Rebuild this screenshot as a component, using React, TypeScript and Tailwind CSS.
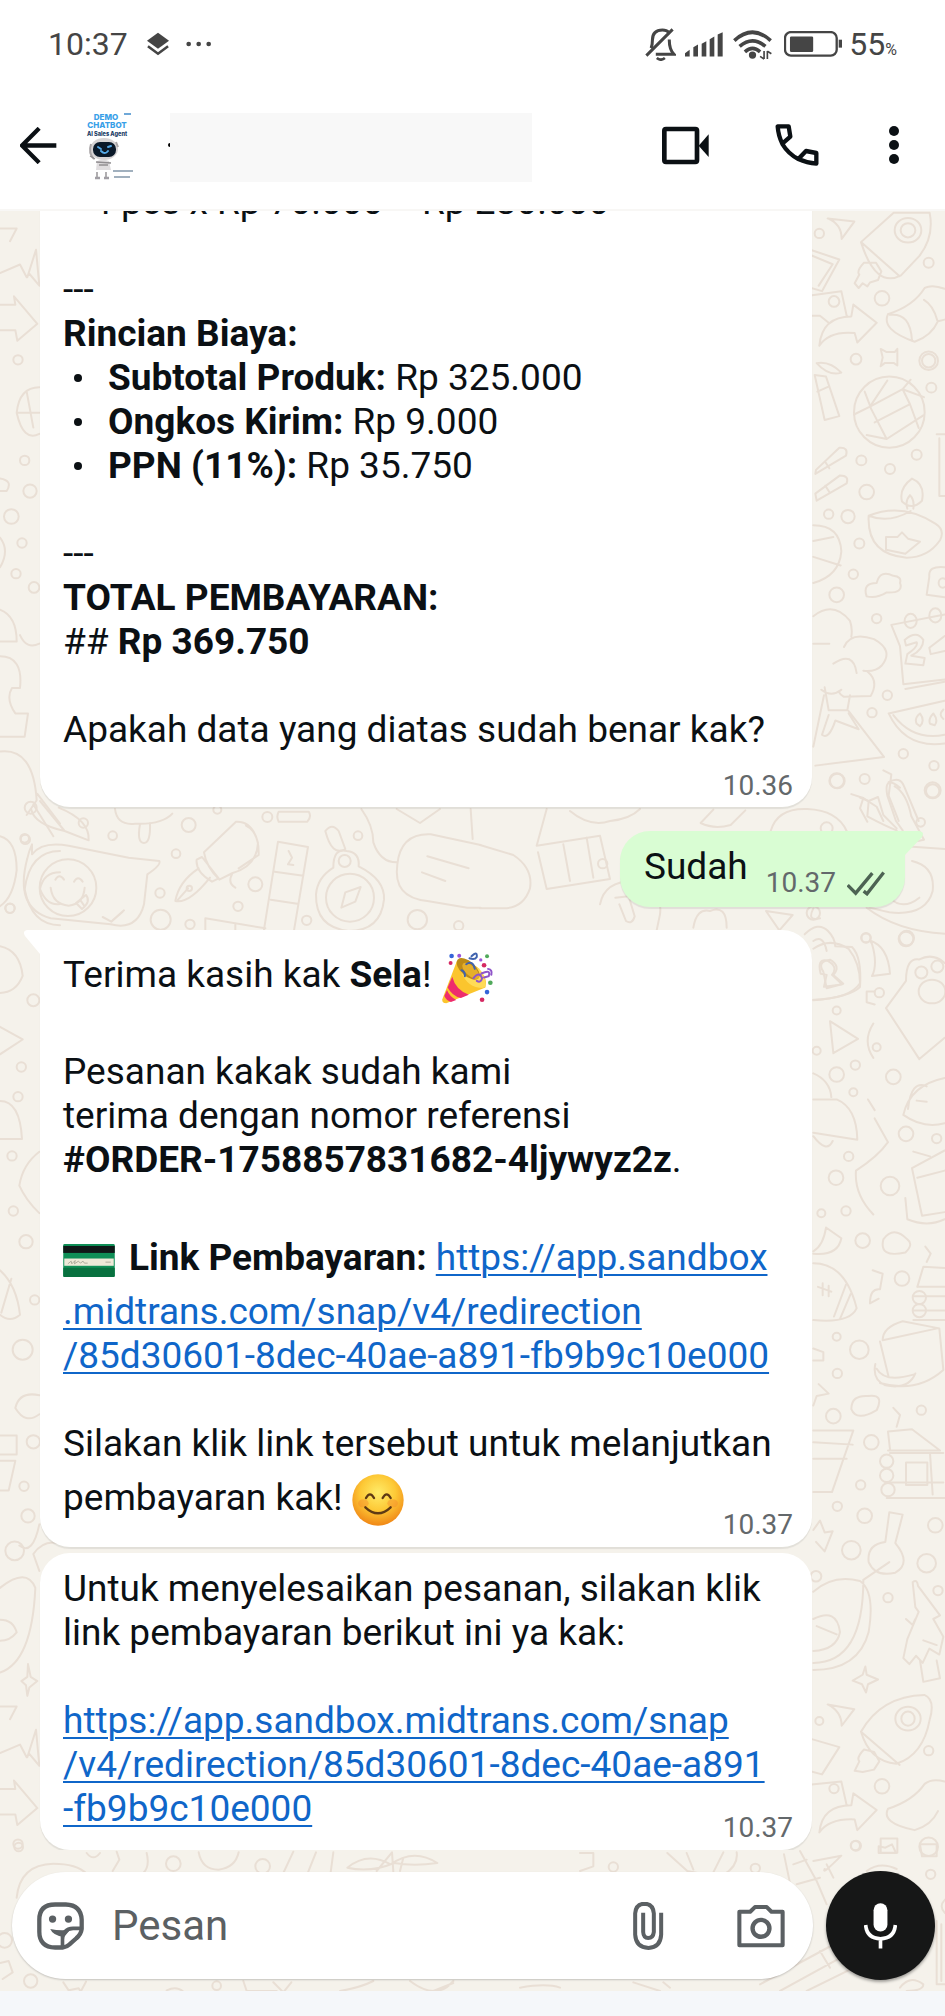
import type { ReactNode } from "react";

const PAYMENT_URL = "https://app.sandbox.midtrans.com/snap/v4/redirection/85d30601-8dec-40ae-a891-fb9b9c10e000";

type Dot = [number, number, number];

function Dots({ items, sy = 1 }: { items: Dot[]; sy?: number }) {
  return (
    <>
      {items.map(([x, y, r]) => (
        <ellipse key={`${x}-${y}-${r}`} cx={x} cy={y} rx={r} ry={r * sy} />
      ))}
    </>
  );
}

function Wallpaper() {
  return (
    <svg
      aria-hidden="true"
      viewBox="0 210 945 1781"
      preserveAspectRatio="xMidYMin slice"
      className="absolute inset-0 h-full w-full [&_*]:[vector-effect:non-scaling-stroke]"
      fill="none"
      stroke="#e9dfd5"
      strokeWidth="2"
      strokeLinecap="round"
      strokeLinejoin="round"
    >
      {/* right edge, upper part */}
      <g transform="translate(780 200) scale(.33333 .3954)">
        <path d="M143 44l80 8-38 44q0-38-42-52zM243 104l98-74h108q14 60-30 108l-56 50q-76 34-120-84zM243 104l116 86M252 156q-24 22-14 30l-14 22 12 12 12-12 14 8 8-10 24-6 10-22-16-22z" />
        <ellipse cx="384" cy="74" rx="40" ry="31" />
        <ellipse cx="384" cy="74" rx="22" ry="18" />
        <path d="M80 120l98 28-52 80-40-10M90 136l68 24-42 54M80 240l104-12 16 62M80 290l40 0 26 18M118 366q8-74 96-74l6-30 70 46-58 50-8-24q-76-6-106 32zM324 286q76-20 110-66 22-10 60 2M324 286q-22 40 80 70 50-14 70-52l20-4M432 250q28 14 40 52M330 288q62-6 66 66" />
        <path d="M302 374l18 8h24l8-8v42l-10-6h-28l-12 8 6-22zM110 410q40-6 74 24-38 10-74-24zM104 440l30 114 44-10-40-100zM112 482l32-12M108 680l70-56q28-2 20 20l-92 46zM106 740l74-46q28 0 20 20l-90 44zM136 660l12 16M136 720l12 16" />
        <ellipse cx="328" cy="534" rx="106" ry="90" />
        <path d="M222 540l48-20 52-66M270 520l98-44 64 20M368 476l24-24M270 520l50 82 110-60M320 602l-60-10M284 560l106-46M390 514l26 60M368 476l22 38M254 482l18 40" />
        <path d="M470 590h24M478 600v146h16M266 796q100-34 200 20 30 16 14 42-36 44-100 44-120-8-114-106zM266 796q60 20 126-12M366 760q-10-34 30-58 40 14 30 56-30 26-60 2zM382 778q-8-18 8-34 14 12 10 34M318 850l34 0 14-12 18 16 36 8-44 30-58-10z" />
        <path d="M100 820q80 0 84 66-6 62-84 80M100 860l60-10M100 900l82 22M260 1000q-14-34 30-34 10-34 50-18 26 2 20 18 12 26-40 24-30 16-60 10zM494 926q-50-4-46 24l-8 46 54 6" />
        <ellipse cx="488" cy="966" rx="12" ry="12" />
        <path d="M100 1050q60-40 110 12 8 20 4 40M192 1128q20-40 90-20 60 28 24 66-20 18-56 14M160 1170q60-34 70 24M262 1190q36 24 10 62l-80 2q-24-12-8-18-30 20-60 0M100 1120h48M134 1230l12 58h56l8-38M132 1250l-32 130M206 1290l106 116-206 22M146 1300l-20 50q20 14 40-36l70 22-30-40" />
        <path d="M494 1046l-160 26 26 54 10 96 124-12M376 1234l118-18M326 1296l168-32M326 1296q50 90 168 76M340 1300q60 66 154 50M410 1322q-8-14 10-26 16 18 0 32zM450 1322q-6-12 10-26 16 18 4 30zM490 1310q-16-10 0-24" />
        <ellipse cx="392" cy="1062" rx="18" ry="18" />
        <ellipse cx="466" cy="1048" rx="18" ry="18" />
        <path d="M374 1110q36-26 56 0 0 24-36 40l40 6-4 18-54-4 6-24q34-20 28-30l-32 8zM494 1100l-46 30 4 16 42-8M310 1440l24 10-8 54 30 64M326 1470q34-16 46 10l44 88M214 1500l36 10-10 26 22 34M250 1510l40 22 20 36" />
        <Dots sy={0.84} items={[[118, 82, 14], [446, 156, 15], [306, 246, 22], [162, 254, 16], [228, 400, 16], [446, 404, 28], [446, 404, 20], [454, 472, 15], [410, 642, 15], [244, 656, 15], [330, 678, 15], [260, 736, 22], [146, 792, 14], [204, 798, 20], [238, 866, 15], [220, 944, 14], [170, 996, 22], [290, 1056, 14], [322, 1250, 14], [276, 1294, 14], [370, 1398, 14], [462, 1428, 14], [170, 1466, 22], [254, 1462, 15], [458, 1492, 20]]} />
      </g>

      {/* right edge, lower part */}
      <g transform="translate(780 930) scale(.33333 .5931)">
        <path d="M100 30q50-20 106 0 34 24 34 58-30 26-140 28M122 72q-12-26 20-22 34 10 14 24l30 16-54 4 8-20zM270 16q54 10 60 56l-54 4q18-20 0-54zM318 130l60-46q0-40 40-36 40-12 76 6M318 130l100 86 76-36M150 152l84 30-74 24zM284 102h-24l0 18 24 4M280 156q-34 30 0 58" />
        <ellipse cx="456" cy="102" rx="40" ry="20" />
        <path d="M100 240q50 12 54 40M100 284h70q60 14 62 68l-132-12M100 346q40 30 58 8M370 310q20-50 124-62M370 310q60 24 124 14M384 300q10-50 56-38M410 286l30 2M264 284l20 18M284 316l40 40q-30 24-96 48-6 40 52 74M396 400l98-30M396 400l30 80 68-6M412 416l82-12M376 450l6 36q60 14 112 0M400 372l50 8M100 540q30-10 38-40l46 18q-10 30-84 26M310 520q30-24 72 0 20 8-6 22-80 10-66-22zM100 560q96 0 130 76-20 26-130 20M114 600l40 8M128 594v20M146 598v18M162 650l36-54M180 654l32-42M436 532l16 12-12 14M278 572l30 6-8 26q-30-2-30 24l26-8" />
        <path d="M412 600l18-34 64 2M412 600h82M400 616h94M400 640h94M400 656h94M308 690q0-22 60-32l110 12 12 70q-80 40-190 22M308 690l164-20M300 692l26 60M286 730q-10 26 30 36 70 8 90-20M290 738q24 24 110 10M100 704l30 6v14h-30M100 800l10-16 36-4-30-16M214 806q0-24 50-22 50-4 26 24-60 20-76-2zM340 804l20 12-10 20" />
        <path d="M100 842h120l-64 104h-56M100 862l118 4M100 890h100M324 844l72-4 84 36H324M324 844l6 30M330 880h160M378 896h64v38h-64zM316 930h174M320 956h174M450 880l8 70" />
        <Dots sy={0.56} items={[[320, 894, 20], [320, 918, 20], [324, 942, 20], [418, 618, 20], [418, 640, 20]]} />
        <path d="M100 1010l20-16 14 20 24-2-24 34-26-16M316 1030l12-50 40 4-22 48q50 34 0 50-60 8-80-18-6-30 50-34zM250 1094l78-30M100 1114q60-30 140-18 46 18 26 86-30 64-166 64M100 1234q150 0 150-140M100 1160q70-20 80 22-10 30-80 32M110 1172l60 14M398 1098q14-6 16 6l66 50-20 6 30 30-12 30-30-10-20 24-20-12-20 14-18-10 12-32 34-46-10-8zM420 1230l10 36 50-6-10-30M378 1160l20 10 8-10M430 1196l40 8M256 1240l4 14 34 8-30 8-6 14-12-14-28-6 30-10zM143 1304l80 8-38 28q0-24-42-36zM243 1350q60-60 190-62 34 8 16 42-20 60-100 74-80-4-106-54zM243 1350l116 56M252 1380q-24 14-14 20l-14 16 24 2 34-4 16-14-16-16z" />
        <ellipse cx="384" cy="1328" rx="38" ry="20" />
        <ellipse cx="384" cy="1328" rx="20" ry="12" />
        <path d="M80 1360l98 16-52 46-40-6M80 1440l104-6 16 40M118 1520q8-46 96-46l6-20 70 28-58 34-8-18q-76-2-106 22zM324 1480q76-14 110-42 22-10 60-4M324 1480q-22 24 80 36 50-8 70-32M302 1530l50 0v24h-50z" />
        <Dots sy={0.56} items={[[258, 12, 14], [380, 12, 22], [298, 104, 14], [424, 70, 18], [472, 60, 18], [170, 134, 12], [290, 196, 12], [110, 202, 12], [226, 226, 14], [170, 242, 22], [340, 246, 22], [220, 272, 12], [378, 342, 22], [470, 350, 14], [206, 380, 14], [168, 416, 22], [330, 430, 28], [198, 472, 14], [124, 476, 12], [248, 522, 22], [366, 586, 22], [170, 684, 12], [238, 706, 28], [172, 746, 14], [160, 818, 22], [424, 808, 14], [274, 862, 22], [242, 934, 14], [172, 970, 14], [254, 986, 22], [466, 1002, 22], [214, 1044, 28], [440, 1066, 28], [108, 1088, 16], [474, 1112, 14], [324, 1124, 14], [118, 1332, 12], [446, 1382, 14], [306, 1442, 22], [162, 1446, 14], [446, 1544, 28], [226, 1542, 14]]} />
      </g>

      {/* left edge */}
      <g transform="translate(0 200) scale(.33333 1.0587)">
        <path d="M0 26h50l-20 12M82 72l26-26 10 34-32-12M0 68l60-8 20 12M0 98h46l-4-8 70 26-60 16-6-10H0M118 176q-60 0-68 24 20 28 68 20M54 200h64M80 180l20 34M0 262q40 2 20 12H0M0 318q30 12 0 28M0 386q50 6 50 30H0M0 430q70 0 60 30l-24 0q-20 10 10 24l38 0-10 22H0M60 410q20 14 58 8M0 520q100-4 110 46l-30 14M0 600q50 4 50 32-10 26-50 34M112 560l68 28M100 570l60 30M180 614q-90 0-106 36 20 34 106 34M180 634q-50 0-60 16 20 16 60 14M0 704q60 4 68 28-20 16-68 16M0 780l68 12-68 14M0 850q60 0 66 36H0M118 898q-50 12-60 32 20 14 60 26M0 1010q50 14 60 42-30 8-60 0M4 1050l30-32M118 1128q-60-4-72 12 30 16 72 6M0 1166h50v18H0M0 1190h46l-20 28H0M118 1250q-20 30-60 20M180 1268q-50-4-80 10l18 16M0 1310q80-20 106 0-10 70-106 80M0 1340q40 0 50 12-20 8-50 8M84 1382l8 12 20 4-24 6-6 8-4-10-14-4 18-4zM0 1422h50l-20 12M82 1470l26-26 10 34-32-12M0 1466l60-8 20 12M0 1500h46l-4-8 70 26-60 16-6-10H0" />
        <Dots sy={0.315} items={[[54, 150, 14], [74, 245, 14], [90, 274, 20], [34, 298, 22], [66, 323, 14], [48, 352, 14], [102, 365, 16], [76, 603, 14], [30, 668, 14], [100, 755, 18], [64, 818, 14], [54, 846, 14], [36, 902, 14], [40, 954, 14], [78, 983, 20], [104, 1038, 14], [68, 1085, 30], [100, 1172, 20], [72, 1214, 14], [84, 1242, 20], [44, 1275, 28], [54, 1552, 14]]} />
      </g>

      {/* band around the outgoing message */}
      <g transform="translate(0 780) scale(.33333)">
        <path d="M120 60l74 90M194 150q-90-20-100-64M194 150l72 28q4-60-90-98M345 84q6 50 60 44 80 4 112-30M420 130q-10 56 12 56 20 0 18-60M96 220q30-40 110-26l180 36 92 10q6 12-36 40l-10 90q-20 80-100 60l-180-18q-110-30-70-180 4-20 14-42z" />
        <circle cx="204" cy="320" r="85" />
        <path d="M152 320q6 50 54 54 44-4 48-54M166 296q12-20 26 0M222 302q12-20 26 0M228 366l30-24q16 20-12 42zM240 356l14 20M308 408l26 14 34-30M338 418l34-30" />
        <path d="M612 214l96-92q50-2 66 64-4 70-76 90l-40 20q-40-40-46-82zM606 228l50 64-20 10q-50-30-46-66zM596 262q-60 40-70 98 40 10 104-70M534 356l30-34M738 134q40 20 38 88l-60 40M696 280q-14 26 10 40" />
        <circle cx="568" cy="322" r="8" />
        <path d="M834 182l90 16-42 250M834 182l-42 264M824 272l86 12M812 356l80 12M866 210l10 20-12 20 16 2M616 446v-34l180 30M706 430v18M836 92h90q10 14-4 30h-86q-8-14 0-30zM976 150q20-26 40 0l20 54q-40 24-60-54z" />
        <path d="M1000 260q0-60 40-50 40 4 36 46 80 40 76 100-10 94-106 94-100-10-98-110 4-50 52-80z" />
        <circle cx="1050" cy="350" r="72" />
        <circle cx="1034" cy="240" r="18" />
        <path d="M1024 380l12-46 46-16-16 44zM1084 84q36 50 36 100 20 60 70 60M1190 84q50 30 70 42l60-42M1412 84l6 90M1192 250q10-94 100-90l150 32M1192 250q-14 100 90 110l120 20h40M1282 226l124 36M1266 274l70 26" />
        <path d="M1440 192l100 30q60 40 50 100-20 60-80 60l-70 0M1640 84l-30 110 190-30 30 130-190 30-26-110M1690 190l20 110M1760 170l20 120" />
        <Dots items={[[566, 132, 21], [802, 108, 15], [338, 164, 13], [528, 218, 13], [74, 172, 13], [1074, 164, 13], [766, 310, 21], [480, 336, 14], [30, 382, 14], [714, 376, 14], [482, 416, 30], [570, 430, 14], [920, 418, 14], [1252, 416, 29], [1376, 434, 14], [250, 126, 14], [652, 86, 12], [92, 80, 18]]} />
      </g>
      <g transform="translate(600 780) scale(.33333)">
        <path d="M-90 90q60 50 120 30 60-6 90-36M340 86l-38 40q40 20 90 6l44-44M512 150q20-70 110-66 90 4 118 66M900 20q-50-40-38 24l26 76 20 28M884 16q36 20 50 90l38 70-30 6M780 50l26 10-4 46q56 30 88 42M806 60l28-12 16 54 40 40M916 196l120 8M936 240q70 16 62 90-20 76-130 64-40-10-60-14M868 350q40 40 90 0M800 380q90 70 235 78M0 370q14-70 100-70 90 20 80 100l-10 48M46 350l40-4 18 60q-8 26-26 14l-20-50M498 390l80 12-40 46zM280 440q10-60 50-50 50-20 50 50M640 382q-20 40 20 30" />
        <path d="M614 460q40-40 70-10 20 20 22 46l50 2q30 30 24 120-30 30-140 40M640 480q30-20 40 30M670 572q-20-30 20-36 34 20 10 46l30 26-50 14z" />
        <Dots items={[[712, 0, 22], [998, 28, 24], [962, 124, 13], [680, 142, 18], [798, 470, 14], [918, 474, 22], [8, 248, 14], [640, 396, 20]]} />
      </g>

      {/* band behind the message field */}
      <g transform="translate(0 1840) scale(.33333)">
        <path d="M50 170q10-100 110-102 70 0 100 30M260 36q20 26 40 0M350 32l8 24-20 34M440 36q10 40-10 60M596 34q10 52 60 52 50-6 60-52M850 96l30-64M924 94l24-60M1000 34l-8 60M1042 80q60-50 130-10 70-50 140-4-70 10-130 0-70 30-140 14zM1130 90l46-56 4 58M1200 90l10-40M0 366l26-6 12 34-30 20M190 424l16 24 30-6 6 10 16-30M500 448q30-14 50 4M730 420l10 30h90M820 424l30 30 24-30M1020 450q60-10 100-30M1230 420q80 60 130 0M1300 450l60-24M1560 440q80-14 120 0M1900 424l80 26M2010 440l-20-16" />
        <Dots items={[[56, 18, 13], [520, 68, 22], [788, 76, 22], [92, 420, 20], [14, 298, 22], [650, 434, 13]]} />
      </g>
      <g transform="translate(580 1840) scale(.33333)">
        <path d="M0 36l40 0v40l-40 14M262 36l60 54 50 10M320 36l20 50M430 34l-30 60M470 34q6 40-40 68M612 40l50 240M660 30l50 90 30 70M640 70l40-14M650 130l70-20M700 60l84-16q-60 60-50 40M740 70l20 40M896 36v-20l20 4 20-10 12 26zM1020 10l50 0v36h-44zM860 90q40-30 90-6M540 430l240-130M600 450l200-110M680 450l130-64M720 330l30 50M960 440q30-40 70-10 0 20-50 20M1070 240v190h25M1084 250v170M1095 176q-20 20 0 40" />
        <Dots items={[[828, 14, 15], [1052, 100, 14], [100, 78, 14], [526, 82, 14]]} />
      </g>
    </svg>
  );
}

function PartyPopper() {
  return (
    <svg role="img" aria-label="Party popper" viewBox="38 54 156 160" className="inline-block h-[53px] w-[53px] align-middle">
      <path d="M40 200q-2 12 12 12l118-48q10-30-24-60-34-28-62-20z" fill="#fbc52d" />
      <path d="M70 132l-14 32q14 26 40 32l24-10q-40-14-50-54zM54 172l-8 18q6 14 20 18l16-6q-20-10-28-30z" fill="#ee2c6d" />
      <path d="M96 116q20 50 66 50l8-4q6-26-20-56-40-30-58-22z" fill="#ffdb57" />
      <ellipse cx="118" cy="108" rx="22" ry="42" transform="rotate(-48 118 108)" fill="#bd8b16" />
      <ellipse cx="126" cy="114" rx="15" ry="32" transform="rotate(-48 126 114)" fill="#e5af2b" />
      <path d="M112 94q20-14 26 14M98 112q12 6 10 18M128 70q18-18 16 2-6 10-22 4" fill="none" stroke="#3f62ae" strokeWidth="6" strokeLinecap="round" />
      <path d="M134 136q18-22 26 0-4 16-16 8M158 122q30-14 22 8l-14 4M178 108q14 2 10 18" fill="none" stroke="#8f55c9" strokeWidth="6" strokeLinecap="round" />
      <g fill="#3564d8"><circle cx="68" cy="69" r="7" /><circle cx="175" cy="178" r="7" /></g>
      <g fill="#d52963"><circle cx="65" cy="90" r="6" /><circle cx="166" cy="97" r="7" /><circle cx="160" cy="201" r="7" /></g>
      <g fill="#50a95b"><circle cx="175" cy="70" r="6" /><circle cx="185" cy="150" r="7" /></g>
      <g fill="#9a54da"><circle cx="91" cy="68" r="6" /><circle cx="156" cy="81" r="5" /></g>
    </svg>
  );
}

function CreditCard() {
  return (
    <svg role="img" aria-label="Credit card" viewBox="0 0 156 100" className="mr-[14px] inline-block h-[33px] w-[52px] align-middle">
      <rect width="156" height="100" rx="4" fill="#0f8f57" />
      <path d="M0 72h156v24q0 4-4 4H4q-4 0-4-4z" fill="#08713f" />
      <rect y="6" width="156" height="21" fill="#101817" />
      <rect x="3" y="44" width="150" height="22" fill="#eee9d8" />
      <path d="M14 60l10-8 2 8 10-10-2 10 12-8 6 6 8-6 4 6h10M128 55h16" fill="none" stroke="#8f8f80" strokeWidth="2" />
    </svg>
  );
}

function SmilingFace() {
  return (
    <svg role="img" aria-label="Smiling face" viewBox="0 0 156 156" className="inline-block h-[52px] w-[52px] align-middle">
      <defs>
        <radialGradient id="face" cx=".5" cy=".36" r=".62">
          <stop offset="0" stopColor="#ffec69" />
          <stop offset=".55" stopColor="#fdc936" />
          <stop offset="1" stopColor="#f18b18" />
        </radialGradient>
      </defs>
      <circle cx="78" cy="78" r="77" fill="url(#face)" />
      <g fill="#f58b2e" opacity=".45"><ellipse cx="34" cy="88" rx="16" ry="12" /><ellipse cx="122" cy="88" rx="16" ry="12" /></g>
      <path d="M42 72q12-22 24 0M92 72q12-22 24 0M40 100q38 36 76 0" fill="none" stroke="#5e3a14" strokeWidth="7" strokeLinecap="round" />
    </svg>
  );
}

function StatusBar() {
  return (
    <div className="flex h-[88px] items-center justify-between pr-12 pl-12 text-[#454545]">
      <div className="flex items-center">
        <span className="text-[32px]">10:37</span>
        <svg aria-label="Layers" viewBox="440 92 70 74" className="ml-[18px] h-6 w-6" fill="currentColor">
          <path d="M475 94l34 25-34 25-34-25z" />
          <path d="M444 136l31 23 31-23" fill="none" stroke="currentColor" strokeWidth="8" />
        </svg>
        <svg aria-label="More notifications" viewBox="0 0 78 16" className="ml-4 h-[6px] w-[26px]" fill="currentColor">
          <circle cx="8" cy="8" r="7" /><circle cx="38" cy="8" r="7" /><circle cx="68" cy="8" r="7" />
        </svg>
      </div>
      <div className="flex items-center">
        <svg aria-label="Notifications off" viewBox="518 82 92 98" className="h-[33px] w-[31px]" fill="none" stroke="currentColor" strokeWidth="9">
          <path d="M522 164l78-78M536 142q4-8 4-24 0-30 30-30 12 0 20 8M550 160h54q-14-14-14-44" />
          <path d="M553 171q12 10 24 0" strokeWidth="8" />
        </svg>
        <svg aria-label="Signal" viewBox="642 94 114 74" className="ml-[9px] h-[25px] w-[38px]" fill="currentColor">
          <path d="M642 167v-10l14-10v20zM667 167v-28l14-8v36zM692 167v-38l14-8v46zM716 167v-52l14-8v60zM740 167v-66l15-7v73z" />
        </svg>
        <svg aria-label="Wi-Fi" viewBox="786 84 118 92" className="ml-[10px] h-[31px] w-[39px]" fill="none" stroke="currentColor" strokeWidth="11">
          <path d="M790 118q55-50 110 0M806 136q39-34 78 0M822 152q23-20 46 0" />
          <circle cx="845" cy="162" r="11" fill="currentColor" stroke="none" />
          <path d="M880 150v24M890 150v24M868 166l12 8M902 158l-12-8" strokeWidth="5" />
        </svg>
        <svg aria-label="Battery" viewBox="940 90 178 78" className="ml-3 h-[26px] w-[59px]" fill="none" stroke="currentColor">
          <rect x="943" y="93" width="156" height="71" rx="18" strokeWidth="7" />
          <rect x="958" y="106" width="70" height="47" rx="4" fill="currentColor" stroke="none" />
          <path d="M1110 116v24" strokeWidth="10" />
        </svg>
        <span className="ml-[6px] text-[32px]">55<span className="text-[16px]">%</span></span>
      </div>
    </div>
  );
}

function Avatar() {
  return (
    <svg aria-label="Demo Chatbot" viewBox="80 100 72 92" className="h-[92px] w-[72px]" fontFamily="Inter, sans-serif" textAnchor="middle">
      <g fill="#38a0e8" fontWeight="800" fontSize="8">
        <text x="106" y="121">DEMO</text>
        <text x="107" y="129">CHATBOT</text>
      </g>
      <text x="107" y="137" fill="#183a63" fontWeight="800" fontSize="5.6">AI Sales Agent</text>
      <path d="M124 115h7" stroke="#6fa8d8" strokeWidth="2" />
      <ellipse cx="104" cy="150" rx="14" ry="11" fill="#d7d4d5" />
      <rect x="93" y="143" width="23" height="15" rx="7" fill="#0a1929" />
      <path d="M98 148l3 2M108 148l3-1M101 152q4 4 7 0" stroke="#54a9e8" strokeWidth="2" strokeLinecap="round" />
      <path d="M91 145q-3 9 3 15M116 143l2 5" stroke="#aaa6a8" strokeWidth="2" fill="none" />
      <path d="M97 162q6-3 12 0l2 9h-15z" fill="#e0dddf" />
      <path d="M96 163l15 1M97 173v6M106 173v6M99 166h9M95 160l-5-3" stroke="#918e91" strokeWidth="1.4" />
      <path d="M95 179h5M104 179h5" stroke="#a19ea4" strokeWidth="2.5" />
      <path d="M113 172h20M114 178h16" stroke="#8297a9" strokeWidth="1.4" />
    </svg>
  );
}

function ChatHeader() {
  return (
    <div className="flex h-[114px] items-center justify-between pr-[46px] pl-5 text-[#0b1014]">
      <div className="flex items-center">
        <button type="button" aria-label="Back">
          <svg viewBox="60 378 112 112" className="h-[37px] w-[37px]" fill="none" stroke="currentColor" strokeWidth="13">
            <path d="M170 434H68M118 382l-52 52 52 52" />
          </svg>
        </button>
        <div className="ml-[23px]"><Avatar /></div>
        <div className="ml-4 flex items-center">
          <span className="h-1 w-[2px] rounded-l-full bg-black" />
          <span className="mt-1 h-[69px] w-[362px] bg-[#f8f8f8]" />
        </div>
      </div>
      <div className="flex items-center">
        <button type="button" aria-label="Video call">
          <svg viewBox="574 378 141 117" className="h-[39px] w-[47px]" fill="none" stroke="currentColor">
            <rect x="581" y="387" width="98" height="99" rx="5" strokeWidth="14" />
            <path d="M684 437l30-34v68z" fill="currentColor" stroke="none" />
          </svg>
        </button>
        <button type="button" aria-label="Voice call" className="ml-[66px]">
          <svg viewBox="914 370 132 132" className="h-11 w-11" fill="none" stroke="currentColor" strokeWidth="13" strokeLinejoin="round">
            <path d="M922 380h33l5 31-24 21q-12-24-14-52zM1038 492v-32l-31-6-23 24q26 12 54 14zM936 433q18 30 48 45" />
          </svg>
        </button>
        <button type="button" aria-label="More options" className="ml-[70px]">
          <svg viewBox="0 0 30 114" className="h-[38px] w-[10px]" fill="currentColor">
            <circle cx="15" cy="15" r="15" /><circle cx="15" cy="57" r="15" /><circle cx="15" cy="99" r="15" />
          </svg>
        </button>
      </div>
    </div>
  );
}

function Time({ children }: { children: ReactNode }) {
  return <time className="block text-[28px] leading-8 text-[#63686b]">{children}</time>;
}

const incoming = "relative w-[772px] max-w-full rounded-[30px] bg-white pr-[19px] pl-[23px] shadow-[0_2px_1px_rgba(0,0,0,0.08)]";
const link = "text-[#0f66c9] underline decoration-2 underline-offset-4";

const costs = [
  ["Subtotal Produk:", "Rp 325.000"],
  ["Ongkos Kirim:", "Rp 9.000"],
  ["PPN (11%):", "Rp 35.750"],
];

function Messages() {
  return (
    <main className="relative flex min-h-0 flex-1 flex-col justify-end overflow-hidden px-10 text-[37px] leading-[44px] text-[#0b1014]">
      <article className={`${incoming} shrink-0 pt-[14px] pb-[5px]`}>
        <p className="pl-7">4 pcs x Rp 70.000 = Rp 280.000</p>
        <p className="mt-11">---</p>
        <p className="font-bold">Rincian Biaya:</p>
        <ul>
          {costs.map(([label, value]) => (
            <li key={label} className="flex items-center">
              <span className="mr-[26px] ml-[11px] h-2 w-2 rounded-full bg-current" />
              <span><b>{label}</b> {value}</span>
            </li>
          ))}
        </ul>
        <p className="mt-11">---</p>
        <p className="font-bold">TOTAL PEMBAYARAN:</p>
        <p>## <b>Rp 369.750</b></p>
        <p className="mt-11">Apakah data yang diatas sudah benar kak?</p>
        <div className="mt-[18px] flex justify-end"><Time>10.36</Time></div>
      </article>

      <article className="relative mt-6 flex shrink-0 items-end self-end rounded-[30px] rounded-tr-none bg-[#d9fdd3] pt-[14px] pr-5 pl-6 shadow-[0_2px_1px_rgba(0,0,0,0.08)]">
        <svg aria-hidden="true" viewBox="0 0 18 24" className="absolute top-0 left-full h-6 w-[18px]" fill="#d9fdd3">
          <path d="M0 0h14q6 1 3 6L0 24z" />
        </svg>
        <p className="pb-[18px]">Sudah</p>
        <div className="flex items-center gap-[11px] pb-2 pl-[18px]">
          <Time>10.37</Time>
          <svg aria-label="Delivered" viewBox="742 262 114 74" className="h-[25px] w-[38px] text-[#4d6353]" fill="none" stroke="currentColor" strokeWidth="10">
            <path d="M744 304l24 24 50-60M792 322l10 8 50-64" />
          </svg>
        </div>
      </article>

      <article className={`${incoming} mt-[23px] shrink-0 rounded-tl-none pt-[14px]`}>
        <svg aria-hidden="true" viewBox="0 0 16 24" className="absolute top-0 right-full h-6 w-4" fill="#fff">
          <path d="M16 0H3Q-2 1 1 6l15 18z" />
        </svg>
        <p className="leading-[62px]">Terima kasih kak <b>Sela</b>! <PartyPopper /></p>
        <p className="mt-11">Pesanan kakak sudah kami<br />terima dengan nomor referensi<br /><b>#ORDER-1758857831682-4ljywyz2z</b>.</p>
        <div className="mt-11">
          <p className="leading-[64px]">
            <CreditCard /><b>Link Pembayaran:</b>{" "}
            <a href={PAYMENT_URL} className={link}>https://app.sandbox</a>
          </p>
          <p>
            <a href={PAYMENT_URL} className={link}>.midtrans.com/snap/v4/redirection<br />/85d30601-8dec-40ae-a891-fb9b9c10e000</a>
          </p>
        </div>
        <p className="mt-11">Silakan klik link tersebut untuk melanjutkan</p>
        <div className="flex items-end justify-between">
          <p className="pb-[17px] leading-[64px]">pembayaran kak! <SmilingFace /></p>
          <div className="pb-[6px]"><Time>10.37</Time></div>
        </div>
      </article>

      <article className={`${incoming} mt-[6px] shrink-0 pt-[14px]`}>
        <p>Untuk menyelesaikan pesanan, silakan klik<br />link pembayaran berikut ini ya kak:</p>
        <div className="mt-11 flex items-end">
          <p className="w-full pb-[19px]">
            <a href={PAYMENT_URL} className={link}>
              https://app.sandbox.midtrans.com/snap<br />/v4/redirection/85d30601-8dec-40ae-a891<br />-fb9b9c10e000
            </a>
          </p>
          <div className="-ml-[70px] pb-[6px]"><Time>10.37</Time></div>
        </div>
      </article>
    </main>
  );
}

function Composer() {
  return (
    <form className="relative flex items-center gap-[13px] pt-[21px] pr-[10px] pb-[11px] pl-3" onSubmit={(e) => e.preventDefault()}>
      <div className="flex h-[107px] min-w-0 flex-1 items-center rounded-full bg-white pr-7 pl-[25px] text-[#5b6063] shadow-[0_1px_2px_rgba(0,0,0,0.2)]">
        <button type="button" aria-label="Stickers">
          <svg viewBox="110 187 142 144" className="h-12 w-[47px]" fill="none" stroke="currentColor" strokeWidth="13" strokeLinejoin="round">
            <path d="M187 324h-22q-48-2-48-48v-36q0-46 48-46h32q46 2 48 46v28q-2 16-16 28l-20 18q-8 8-22 10z" />
            <path d="M187 322v-22q0-32 32-34h24M187 296v-20" strokeWidth="11" />
            <path d="M150 268q30 6 60 2l-18 22q-34-4-42-24z" fill="currentColor" stroke="none" />
            <circle cx="157" cy="238" r="11" fill="currentColor" stroke="none" />
            <circle cx="205" cy="238" r="11" fill="currentColor" stroke="none" />
          </svg>
        </button>
        <input aria-label="Pesan" placeholder="Pesan" className="ml-7 h-14 min-w-0 flex-1 bg-transparent text-[42px] outline-none placeholder:text-[#5b6063]" />
        <button type="button" aria-label="Attach" className="mr-[73px]">
          <svg viewBox="160 182 92 144" className="h-12 w-[31px]" fill="none" stroke="currentColor" strokeWidth="12">
            <path d="M244 214v66q-2 38-38 40-38-2-40-40v-64q2-28 28-29 26 1 28 29v56q-2 18-17 18-14 0-15-18v-58" />
          </svg>
        </button>
        <button type="button" aria-label="Camera">
          <svg viewBox="471 190 142 130" className="h-11 w-12" fill="none" stroke="currentColor" strokeWidth="12" strokeLinejoin="round">
            <path d="M478 213h32l14-14h35l14 14h33v99H478z" />
            <circle cx="542" cy="262" r="25" strokeWidth="13" />
          </svg>
        </button>
      </div>
      <button type="button" aria-label="Record voice message" className="flex h-[109px] w-[109px] items-center justify-center rounded-full bg-[#161717] shadow-[0_2px_3px_rgba(0,0,0,0.35)]">
        <svg viewBox="852 187 100 138" className="h-[46px] w-[33px]" fill="none" stroke="#fff" strokeWidth="11">
          <rect x="881" y="187" width="42" height="86" rx="21" fill="#fff" stroke="none" />
          <path d="M857 253q3 40 45 42 42-2 45-42M902 295v29" />
        </svg>
      </button>
    </form>
  );
}

export default function App() {
  return (
    <div className="flex h-screen flex-col overflow-hidden bg-[#f5f7fa] font-['Roboto',sans-serif]">
      <header className="relative z-10 h-[211px] shrink-0 border-b-2 border-[#f8f7f5] bg-white">
        <StatusBar />
        <ChatHeader />
      </header>
      <div className="relative flex min-h-0 flex-1 flex-col overflow-hidden bg-[#f5f2eb]">
        <Wallpaper />
        <Messages />
        <Composer />
      </div>
      <footer className="h-[25px] shrink-0 bg-[#f5f7fa]" />
    </div>
  );
}
